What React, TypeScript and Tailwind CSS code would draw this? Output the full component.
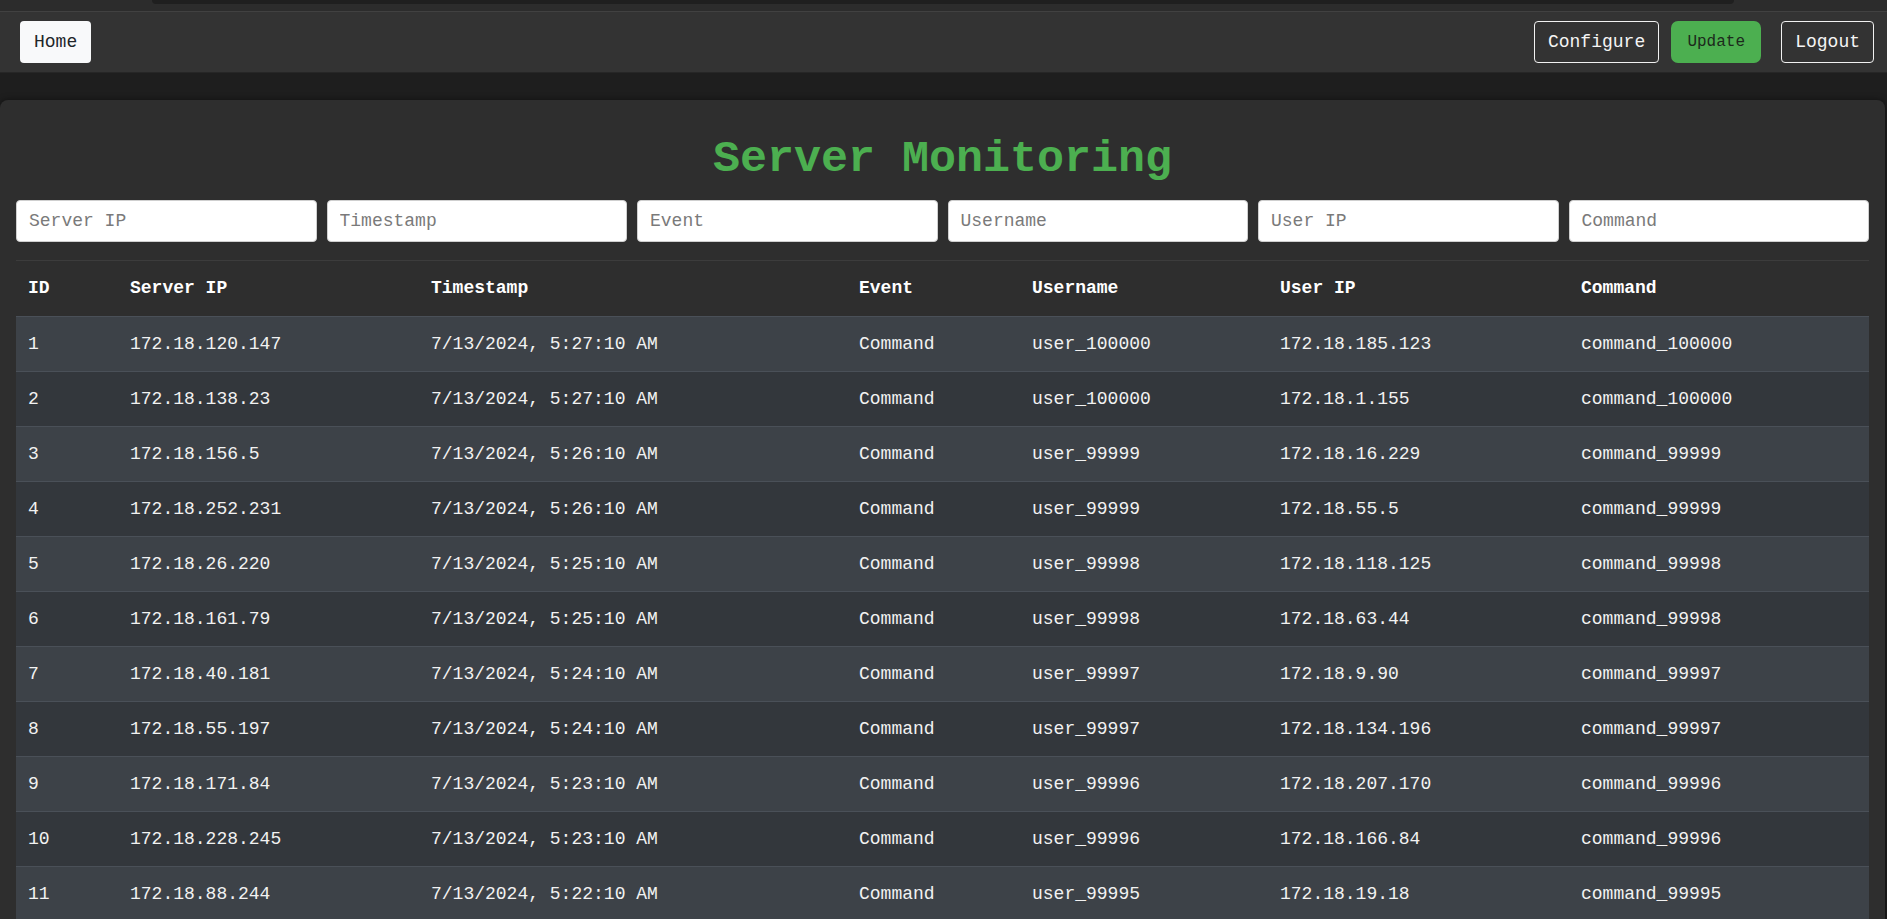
import React from "react";

const rows: [string, string, string, string, string, string][] = [
  ["172.18.120.147", "7/13/2024, 5:27:10 AM", "Command", "user_100000", "172.18.185.123", "command_100000"],
  ["172.18.138.23", "7/13/2024, 5:27:10 AM", "Command", "user_100000", "172.18.1.155", "command_100000"],
  ["172.18.156.5", "7/13/2024, 5:26:10 AM", "Command", "user_99999", "172.18.16.229", "command_99999"],
  ["172.18.252.231", "7/13/2024, 5:26:10 AM", "Command", "user_99999", "172.18.55.5", "command_99999"],
  ["172.18.26.220", "7/13/2024, 5:25:10 AM", "Command", "user_99998", "172.18.118.125", "command_99998"],
  ["172.18.161.79", "7/13/2024, 5:25:10 AM", "Command", "user_99998", "172.18.63.44", "command_99998"],
  ["172.18.40.181", "7/13/2024, 5:24:10 AM", "Command", "user_99997", "172.18.9.90", "command_99997"],
  ["172.18.55.197", "7/13/2024, 5:24:10 AM", "Command", "user_99997", "172.18.134.196", "command_99997"],
  ["172.18.171.84", "7/13/2024, 5:23:10 AM", "Command", "user_99996", "172.18.207.170", "command_99996"],
  ["172.18.228.245", "7/13/2024, 5:23:10 AM", "Command", "user_99996", "172.18.166.84", "command_99996"],
  ["172.18.88.244", "7/13/2024, 5:22:10 AM", "Command", "user_99995", "172.18.19.18", "command_99995"],
];

const headers = ["ID", "Server IP", "Timestamp", "Event", "Username", "User IP", "Command"];
const widths = ["w-[102px]", "w-[301px]", "w-[428px]", "w-[173px]", "w-[248px]", "w-[301px]", "w-[300px]"];
const placeholders = ["Server IP", "Timestamp", "Event", "Username", "User IP", "Command"];

export default function App() {
  return (
    <div
      className="h-[919px] w-[1887px] overflow-hidden bg-[#1e1e1e] text-white"
      style={{ fontFamily: '"Liberation Mono", "Courier New", monospace' }}
    >
      {/* top strip */}
      <div className="h-[11px] bg-[#2c2c2c] pl-[152px]">
        <div className="h-[4px] w-[1582px] rounded-b-full bg-[#1f1f1f]" />
      </div>
      <div className="h-[1px] bg-[#414141]" />
      {/* nav */}
      <nav className="flex h-[60px] items-center bg-[#333333] pl-[20px] pr-[13px] text-[18px]">
        <button className="h-[42px] rounded-[4px] bg-[#f8f9fa] px-[14px] text-[#212529]">Home</button>
        <div className="ml-auto flex items-center">
          <button className="h-[42px] rounded-[4px] border border-[#f1f1f1] px-[13px] text-[#f5f5f5]">Configure</button>
          <button className="ml-[12px] h-[42px] w-[90px] rounded-[7px] bg-[#4caf50] text-[16px] text-[#1c2a1c]">Update</button>
          <button className="ml-[20px] h-[42px] rounded-[4px] border border-[#f1f1f1] px-[13px] text-[#f5f5f5]">Logout</button>
        </div>
      </nav>
      <div className="h-[1px] bg-[#262626]" />
      <div className="h-[27px]" />
      {/* container */}
      <div className="mr-[2px] rounded-t-[8px] bg-[#2e2e2e] px-[16px] pt-[34px] shadow-[0_0_6px_rgba(0,0,0,0.5)]">
        <h1 className="h-[51px] text-center text-[45px] font-bold leading-[51px] text-[#4caf50]">Server Monitoring</h1>
        <div className="mt-[15px] grid grid-cols-6 gap-[10px]">
          {placeholders.map((p) => (
            <input
              key={p}
              placeholder={p}
              className="h-[42px] rounded-[4px] border border-[#cfcfcf] bg-white px-[12px] text-[18px] text-black placeholder:text-[#7a7a7a]"
            />
          ))}
        </div>
        <table className="mt-[18px] w-full table-fixed border-collapse text-[18px]">
          <thead>
            <tr className="h-[56px] border-t border-[#3c3c3c] bg-[#2e2e2e]">
              {headers.map((h, i) => (
                <th key={h} className={`${widths[i]} px-[12px] text-left font-bold text-white`}>
                  {h}
                </th>
              ))}
            </tr>
          </thead>
          <tbody>
            {rows.map((r, i) => (
              <tr
                key={i}
                className={`h-[55px] border-t border-[#4a5058] ${i % 2 === 0 ? "bg-[#3d4248]" : "bg-[#33373c]"}`}
              >
                <td className="px-[12px] text-[#f2f2f2]">{i + 1}</td>
                {r.map((c, j) => (
                  <td key={j} className="px-[12px] text-[#f2f2f2] whitespace-nowrap">
                    {c}
                  </td>
                ))}
              </tr>
            ))}
          </tbody>
        </table>
      </div>
    </div>
  );
}
